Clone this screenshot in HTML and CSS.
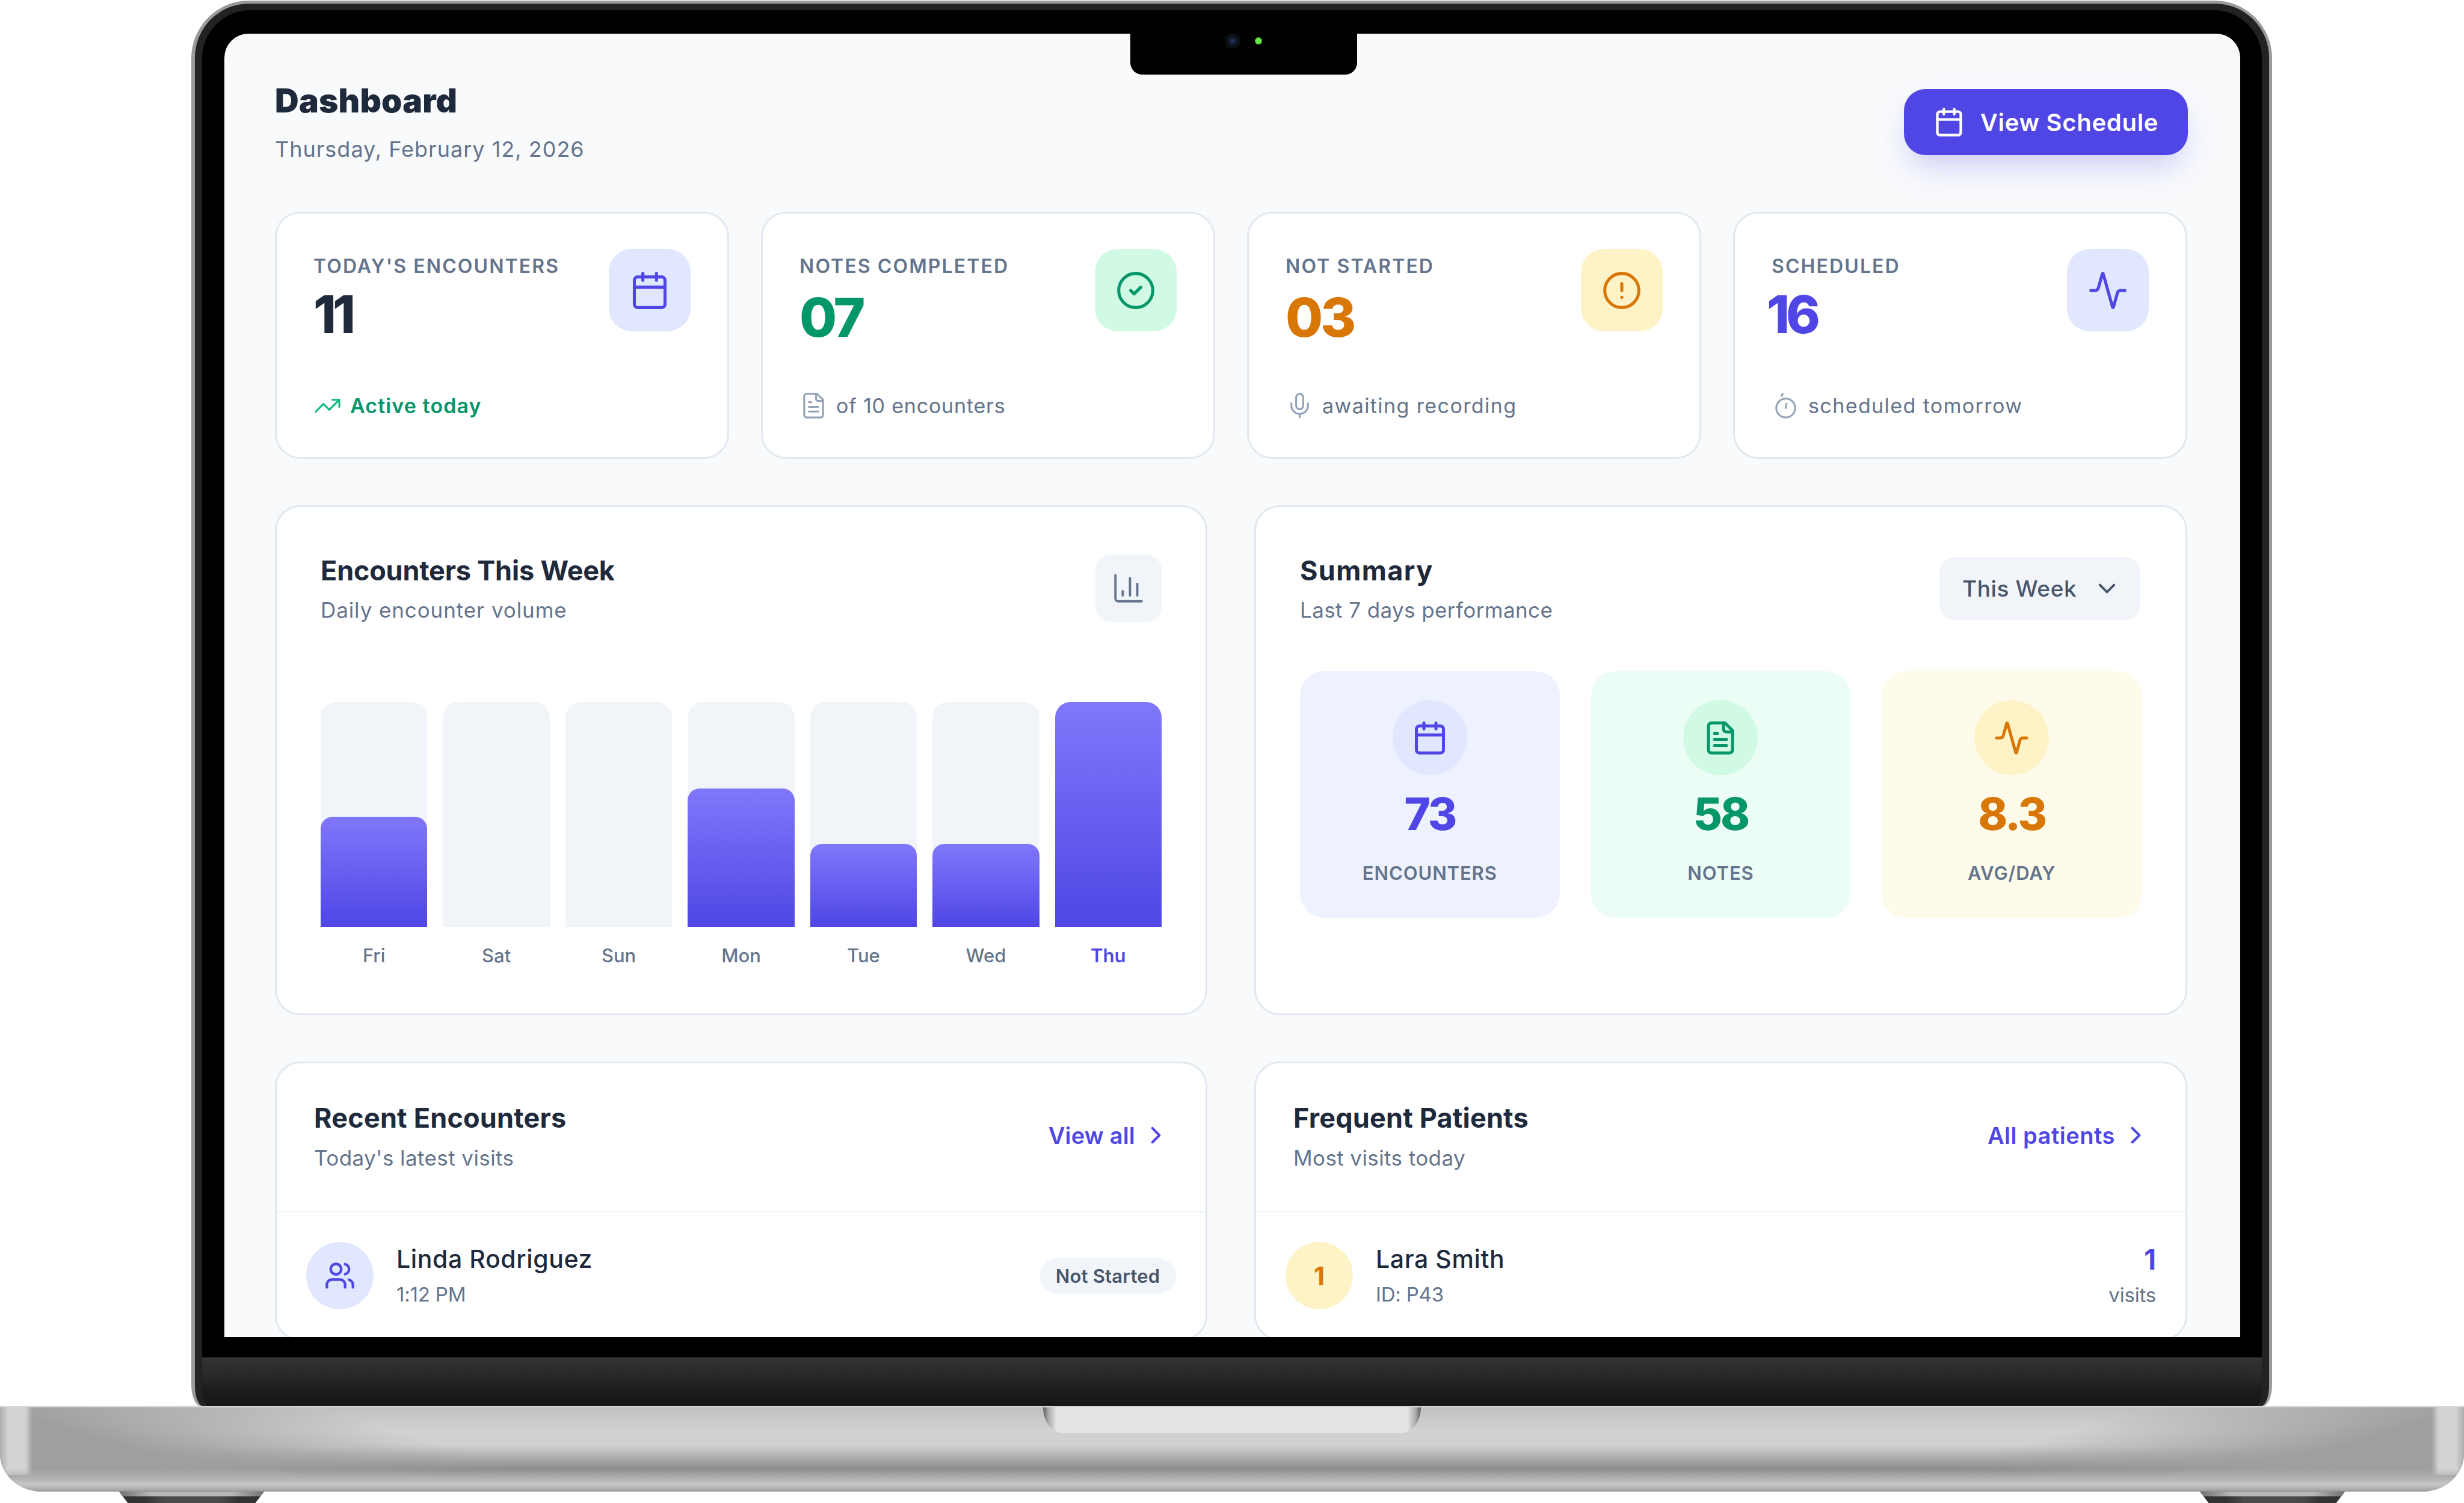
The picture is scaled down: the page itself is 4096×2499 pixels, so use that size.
FILE: index.html
```html
<!DOCTYPE html>
<html lang="en">
<head>
<meta charset="utf-8">
<title>Dashboard</title>
<link rel="stylesheet" href="styles.css">
</head>
<body>
<svg class="sprite" xmlns="http://www.w3.org/2000/svg">
  <symbol id="i-calendar" viewBox="0 0 24 24"><path d="M8 2v4"/><path d="M16 2v4"/><rect x="3" y="4" width="18" height="18" rx="2"/><path d="M3 10h18"/></symbol>
  <symbol id="i-check" viewBox="0 0 24 24"><circle cx="12" cy="12" r="10"/><path d="m9 12 2 2 4-4"/></symbol>
  <symbol id="i-alert" viewBox="0 0 24 24"><circle cx="12" cy="12" r="10"/><path d="M12 8v4"/><path d="M12 16h.01"/></symbol>
  <symbol id="i-activity" viewBox="0 0 24 24"><path d="M22 12h-2.48a2 2 0 0 0-1.93 1.46l-2.35 8.36a.25.25 0 0 1-.48 0L9.24 2.18a.25.25 0 0 0-.48 0l-2.35 8.36A2 2 0 0 1 4.49 12H2"/></symbol>
  <symbol id="i-trend" viewBox="0 0 24 24"><path d="M22 7 13.5 15.5 8.5 10.5 2 17"/><path d="M16 7h6v6"/></symbol>
  <symbol id="i-file" viewBox="0 0 24 24"><path d="M15 2H6a2 2 0 0 0-2 2v16a2 2 0 0 0 2 2h12a2 2 0 0 0 2-2V7Z"/><path d="M14 2v4a2 2 0 0 0 2 2h4"/><path d="M10 9H8"/><path d="M16 13H8"/><path d="M16 17H8"/></symbol>
  <symbol id="i-mic" viewBox="0 0 24 24"><path d="M12 2a3 3 0 0 0-3 3v7a3 3 0 0 0 6 0V5a3 3 0 0 0-3-3Z"/><path d="M19 10v2a7 7 0 0 1-14 0v-2"/><path d="M12 19v3"/></symbol>
  <symbol id="i-timer" viewBox="0 0 24 24"><circle cx="12" cy="14" r="8"/><path d="M12 14l.6-3.6"/><path d="M8.4 3.6 9.4 2"/></symbol>
  <symbol id="i-bars" viewBox="0 0 24 24"><path d="M3 3v16a2 2 0 0 0 2 2h16"/><path d="M18 17V9"/><path d="M13 17V5"/><path d="M8 17v-3"/></symbol>
  <symbol id="i-users" viewBox="0 0 24 24"><path d="M16 21v-2a4 4 0 0 0-4-4H6a4 4 0 0 0-4 4v2"/><circle cx="9" cy="7" r="4"/><path d="M22 21v-2a4 4 0 0 0-3-3.87"/><path d="M16 3.13a4 4 0 0 1 0 7.75"/></symbol>
  <symbol id="i-right" viewBox="0 0 24 24"><path d="m9 18 6-6-6-6"/></symbol>
  <symbol id="i-down" viewBox="0 0 24 24"><path d="m6 9 6 6 6-6"/></symbol>
</svg>

<div class="laptop">
  <div class="lid">
    <div class="lid-dark">
      <div class="lid-black">
        <div class="screen-wrap">
          <main class="screen">
            <div class="notch"><span class="cam"></span><span class="led"></span></div>

            <header class="page-head">
              <div>
                <h1 class="page-title">Dashboard</h1>
                <p class="page-date">Thursday, February 12, 2026</p>
              </div>
              <button class="btn-primary"><svg class="ico ico-btn"><use href="#i-calendar"/></svg>View Schedule</button>
            </header>

            <section class="stats">
              <article class="stat">
                <div class="stat-top">
                  <div>
                    <div class="stat-label">TODAY'S ENCOUNTERS</div>
                    <div class="stat-value c-ink">11</div>
                  </div>
                  <div class="tile t-indigo"><svg class="ico ico-tile c-indigo"><use href="#i-calendar"/></svg></div>
                </div>
                <div class="stat-foot f-green"><svg class="ico ico-foot c-emerald"><use href="#i-trend"/></svg>Active today</div>
              </article>
              <article class="stat">
                <div class="stat-top">
                  <div>
                    <div class="stat-label">NOTES COMPLETED</div>
                    <div class="stat-value stat-value-alt c-green">07</div>
                  </div>
                  <div class="tile t-green"><svg class="ico ico-tile c-green"><use href="#i-check"/></svg></div>
                </div>
                <div class="stat-foot stat-foot-tight"><svg class="ico ico-foot c-muted"><use href="#i-file"/></svg>of 10 encounters</div>
              </article>
              <article class="stat">
                <div class="stat-top">
                  <div>
                    <div class="stat-label">NOT STARTED</div>
                    <div class="stat-value stat-value-alt c-amber">03</div>
                  </div>
                  <div class="tile t-amber"><svg class="ico ico-tile c-amber"><use href="#i-alert"/></svg></div>
                </div>
                <div class="stat-foot"><svg class="ico ico-foot c-muted"><use href="#i-mic"/></svg>awaiting recording</div>
              </article>
              <article class="stat">
                <div class="stat-top">
                  <div>
                    <div class="stat-label">SCHEDULED</div>
                    <div class="stat-value stat-value-out c-indigo">16</div>
                  </div>
                  <div class="tile t-indigo"><svg class="ico ico-tile c-indigo"><use href="#i-activity"/></svg></div>
                </div>
                <div class="stat-foot"><svg class="ico ico-foot c-muted"><use href="#i-timer"/></svg>scheduled tomorrow</div>
              </article>
            </section>

            <section class="two-col">
              <article class="panel panel-pad">
                <div class="panel-head">
                  <div>
                    <h2 class="h2 h2-tight">Encounters This Week</h2>
                    <p class="sub sub-wide">Daily encounter volume</p>
                  </div>
                  <div class="icon-btn"><svg class="ico ico-bars c-mid"><use href="#i-bars"/></svg></div>
                </div>
                <div class="chart">
                  <div class="bar-col"><div class="track"><div class="fill" style="height:49%"></div></div><div class="day">Fri</div></div>
                  <div class="bar-col"><div class="track"></div><div class="day">Sat</div></div>
                  <div class="bar-col"><div class="track"></div><div class="day">Sun</div></div>
                  <div class="bar-col"><div class="track"><div class="fill" style="height:61.5%"></div></div><div class="day">Mon</div></div>
                  <div class="bar-col"><div class="track"><div class="fill" style="height:37%"></div></div><div class="day">Tue</div></div>
                  <div class="bar-col"><div class="track"><div class="fill" style="height:37%"></div></div><div class="day">Wed</div></div>
                  <div class="bar-col"><div class="track"><div class="fill" style="height:100%"></div></div><div class="day day-now">Thu</div></div>
                </div>
              </article>

              <article class="panel panel-pad">
                <div class="panel-head panel-head-sum">
                  <div>
                    <h2 class="h2 h2-wide">Summary</h2>
                    <p class="sub">Last 7 days performance</p>
                  </div>
                  <button class="select">This Week<svg class="ico ico-chev c-slate"><use href="#i-down"/></svg></button>
                </div>
                <div class="sum-grid">
                  <div class="sum s-indigo">
                    <div class="sum-circle t-indigo"><svg class="ico ico-sum c-indigo"><use href="#i-calendar"/></svg></div>
                    <div class="sum-value c-indigo">73</div>
                    <div class="sum-label">ENCOUNTERS</div>
                  </div>
                  <div class="sum s-green">
                    <div class="sum-circle t-green"><svg class="ico ico-sum c-green"><use href="#i-file"/></svg></div>
                    <div class="sum-value c-green">58</div>
                    <div class="sum-label">NOTES</div>
                  </div>
                  <div class="sum s-amber">
                    <div class="sum-circle t-amber"><svg class="ico ico-sum c-amber"><use href="#i-activity"/></svg></div>
                    <div class="sum-value c-amber">8.3</div>
                    <div class="sum-label">AVG/DAY</div>
                  </div>
                </div>
              </article>
            </section>

            <section class="two-col two-col-last">
              <article class="panel">
                <div class="list-head">
                  <div>
                    <h2 class="h2">Recent Encounters</h2>
                    <p class="sub sub-list">Today's latest visits</p>
                  </div>
                  <a class="link">View all<svg class="ico ico-chev c-indigo"><use href="#i-right"/></svg></a>
                </div>
                <div class="row">
                  <div class="avatar t-indigo"><svg class="ico ico-avatar c-indigo"><use href="#i-users"/></svg></div>
                  <div class="row-main">
                    <div class="name">Linda Rodriguez</div>
                    <div class="meta">1:12 PM</div>
                  </div>
                  <span class="badge">Not Started</span>
                </div>
              </article>

              <article class="panel">
                <div class="list-head">
                  <div>
                    <h2 class="h2">Frequent Patients</h2>
                    <p class="sub sub-list">Most visits today</p>
                  </div>
                  <a class="link link-wide">All patients<svg class="ico ico-chev c-indigo"><use href="#i-right"/></svg></a>
                </div>
                <div class="row">
                  <div class="avatar t-amber rank">1</div>
                  <div class="row-main">
                    <div class="name">Lara Smith</div>
                    <div class="meta">ID: P43</div>
                  </div>
                  <div class="visits">
                    <div class="visits-n">1</div>
                    <div class="meta">visits</div>
                  </div>
                </div>
              </article>
            </section>
          </main>
        </div>
        <div class="chin"></div>
      </div>
    </div>
  </div>
  <div class="base"><div class="thumb"></div></div>
  <div class="feet"><span class="foot"></span><span class="foot"></span></div>
</div>
</body>
</html>
```

FILE: styles.css
```css
* { box-sizing: border-box; }
html, body { margin: 0; padding: 0; background: #fff; }
body { width: 4096px; height: 2499px; overflow: hidden; font-family: "Inter", "Liberation Sans", sans-serif; color: #1e293b; }
h1, h2, p { margin: 0; }
.sprite { display: none; }
.ico { fill: none; stroke: currentColor; stroke-width: 2; stroke-linecap: round; stroke-linejoin: round; flex: none; display: block; }

/* colours */
.c-ink { color: #1e293b; }
.c-indigo { color: #4f46e5; }
.c-green { color: #059669; }
.c-emerald { color: #10b981; }
.c-amber { color: #d97706; }
.c-muted { color: #94a3b8; }
.c-mid { color: #64748b; }
.c-slate { color: #475569; }
.t-indigo { background: #e0e7ff; }
.t-green { background: #d1fae5; }
.t-amber { background: #fef3c7; }
.s-indigo { background: #eef2ff; }
.s-green { background: #ecfdf5; }
.s-amber { background: #fffbeb; }

/* device */
.laptop { display: flex; flex-direction: column; width: 4096px; }
.lid { width: 3459px; height: 2337px; margin: 1px 0 0 318px; padding: 5px 5px 0 6px; background: #9a9a9c; border-radius: 96px 96px 16px 16px / 96px 96px 36px 36px; }
.lid-dark { height: 100%; padding: 11px 12px 0 12px; background: #222; border-radius: 90px 90px 14px 14px / 90px 90px 34px 34px; }
.lid-black { height: 100%; display: flex; flex-direction: column; background: #000; border-radius: 80px 80px 12px 12px / 80px 80px 32px 32px; overflow: hidden; }
.screen-wrap { padding: 39px 36px 34px 37px; }
.chin { flex: 1; background: linear-gradient(#343434, #2a2a2a 30%, #1c1c1c 70%, #161616); }
.screen { position: relative; height: 2167px; padding: 92px 87px 0 84px; overflow: hidden; background: #f8fafc; border-radius: 40px 40px 0 0; }
.notch { position: absolute; left: 1506px; top: 0; width: 377px; height: 68px; background: #000; border-radius: 0 0 20px 20px; }
.cam { position: absolute; left: 157px; top: -1px; width: 26px; height: 26px; border-radius: 50%; background: radial-gradient(circle, #22305a 0, #1a2440 22%, #0b0f14 45%, #0b0f14 90%, #000 100%); }
.led { position: absolute; left: 207px; top: 6px; width: 12px; height: 12px; border-radius: 50%; background: radial-gradient(circle, #6be84a 40%, #2f8a20 100%); }

.base { width: 4096px; height: 142px; display: flex; justify-content: center; align-items: flex-start; border-radius: 0 0 70px 70px / 0 0 63px 63px; border-top: 2px solid #d5d6d7;
  background:
    linear-gradient(to top, #8e8f91 0, #a8a9ab 3px, #c6c7c9 12px, #b0b1b3 22px, rgba(138,139,141,0) 38px),
    linear-gradient(90deg, #adaeb0 0, #d2d3d5 14px, #d2d3d5 42px, rgba(210,211,213,0) 54px) left top / 60px 80% no-repeat,
    linear-gradient(270deg, #adaeb0 0, #d2d3d5 14px, #d2d3d5 42px, rgba(210,211,213,0) 54px) right top / 60px 80% no-repeat,
    linear-gradient(17deg, #9e9fa1 130px, rgba(158,159,161,0) 290px),
    linear-gradient(-17deg, #9e9fa1 130px, rgba(158,159,161,0) 290px),
    linear-gradient(#bfc0c2 0, #d0d1d3 27%, #cfd0d2 45%, #8a8b8d 74%, #8a8b8d 88%, #a0a1a3 100%);
}
.thumb { width: 628px; height: 43px; border-radius: 0 0 34px 34px / 0 0 43px 43px; background: linear-gradient(90deg, #59595b 0, #a4a5a7 8px, #e3e4e6 22px, #e3e4e6 calc(100% - 22px), #a4a5a7 calc(100% - 8px), #59595b 100%); }
.feet { display: flex; justify-content: space-between; padding: 0 198px; }
.foot { width: 241px; height: 19px; clip-path: polygon(0 0, 100% 0, 94% 100%, 6% 100%);
  background:
    linear-gradient(90deg, #6f7072, #b6b7b9 22%, #b6b7b9 78%, #6f7072) top / 100% 8px no-repeat,
    linear-gradient(90deg, #333 0, #333 18%, #4a4a4a 30%, #4a4a4a 70%, #333 82%, #333 100%); }

/* header */
.page-head { display: flex; justify-content: space-between; align-items: flex-start; height: 110px; margin-bottom: 94px; }
.page-title { font-size: 55px; line-height: 60px; font-weight: 900; color: #1e293b; letter-spacing: 0.2px; margin-top: -11px; }
.page-date { font-size: 36px; line-height: 50px; color: #64748b; margin-top: 26px; letter-spacing: 1px; }
.btn-primary { display: flex; align-items: center; justify-content: center; gap: 26px; width: 472px; height: 110px; border: 0; border-radius: 36px; background: #4f46e5; color: #fff; font: 600 40px "Inter", sans-serif; letter-spacing: 0.7px; box-shadow: 0 26px 52px -12px rgba(79, 70, 229, 0.28); }
.ico-btn { width: 52px; height: 52px; }

/* stat cards */
.stats { display: grid; grid-template-columns: repeat(4, 755px); gap: 53px; margin-bottom: 77px; }
.stat { height: 411px; padding: 59px 61px; background: #fff; border: 3px solid #e2e8f0; border-radius: 42px; display: flex; flex-direction: column; justify-content: space-between; }
.stat-top { display: flex; justify-content: space-between; align-items: flex-start; }
.stat-label { margin-top: 2px; font-size: 32px; line-height: 54px; font-weight: 600; color: #64748b; letter-spacing: 2.1px; white-space: nowrap; }
.stat-value { margin-top: 3px; font-size: 86px; line-height: 100px; font-weight: 800; letter-spacing: -6px; }
.stat-value-alt { font-size: 90px; line-height: 110px; letter-spacing: -4px; }
.stat-value-out { margin-left: -8px; }
.tile { width: 136px; height: 137px; border-radius: 38px; display: flex; align-items: center; justify-content: center; flex: none; }
.ico-tile { width: 68px; height: 68px; stroke-width: 1.8; }
.stat-foot { display: flex; align-items: center; gap: 14px; height: 54px; font-size: 34px; color: #64748b; letter-spacing: 1.4px; white-space: nowrap; }
.stat-foot-tight { letter-spacing: 0.8px; }
.f-green { color: #059669; font-weight: 600; letter-spacing: 1.1px; }
.ico-foot { width: 47px; height: 47px; stroke-width: 1.6; }

/* panels */
.two-col { display: grid; grid-template-columns: 1550px 1551px; gap: 78px; margin-bottom: 77px; }
.two-col-last { margin-bottom: 0; }
.panel { background: #fff; border: 3px solid #e2e8f0; border-radius: 42px; }
.panel-pad { padding: 79px 73px 76px; }
.panel-head { display: flex; justify-content: space-between; align-items: flex-start; min-height: 112px; margin-bottom: 128px; }
.panel-head-sum { margin-bottom: 77px; padding-right: 2px; }
.h2 { padding-top: 2px; font-size: 45px; line-height: 50px; font-weight: 700; color: #1e293b; letter-spacing: 0.2px; }
.h2-tight { letter-spacing: -0.2px; }
.h2-wide { letter-spacing: 1.4px; }
.sub { font-size: 35px; line-height: 50px; color: #64748b; margin-top: 15px; letter-spacing: 0.4px; white-space: nowrap; }
.sub-wide { letter-spacing: 0.9px; }
.sub-list { margin-top: 16px; }
.icon-btn { width: 110px; height: 112px; border-radius: 26px; background: #f1f5f9; display: flex; align-items: center; justify-content: center; }
.ico-bars { width: 58px; height: 58px; stroke-width: 1.6; }

.chart { display: grid; grid-template-columns: repeat(7, 1fr); gap: 26px; }
.track { height: 374px; border-radius: 26px 26px 0 0; background: #f1f5f9; display: flex; align-items: flex-end; overflow: hidden; }
.fill { width: 100%; border-radius: 20px 20px 0 0; background: linear-gradient(#8177fb, #4f46e5); }
.day { margin-top: 28px; line-height: 40px; font-size: 31px; font-weight: 500; color: #64748b; text-align: center; }
.day-now { color: #4f46e5; font-weight: 600; }

.select { display: flex; align-items: center; justify-content: space-between; width: 334px; height: 105px; margin-top: 4px; padding: 0 32px 0 38px; border: 0; border-radius: 26px; background: #f1f5f9; color: #475569; font: 500 37px "Inter", sans-serif; letter-spacing: 0.6px; }
.ico-chev { width: 47px; height: 47px; stroke-width: 2; }

.sum-grid { display: grid; grid-template-columns: repeat(3, 1fr); gap: 52px; }
.sum { height: 410px; padding-top: 48px; border-radius: 40px; display: flex; flex-direction: column; align-items: center; }
.sum-circle { width: 124px; height: 125px; border-radius: 50%; display: flex; align-items: center; justify-content: center; }
.ico-sum { width: 60px; height: 60px; stroke-width: 2; }
.sum-value { margin-top: 24px; font-size: 74px; line-height: 80px; font-weight: 800; letter-spacing: -3px; }
.sum-label { margin-top: 39px; font-size: 31px; line-height: 40px; font-weight: 600; color: #64748b; letter-spacing: 0.9px; }

/* lists */
.list-head { display: flex; justify-content: space-between; align-items: center; height: 248px; padding: 0 59px 0 62px; border-bottom: 3px solid #f1f5f9; }
.link { display: flex; align-items: center; gap: 11px; margin-top: -6px; font-size: 38px; font-weight: 600; color: #4f46e5; letter-spacing: 0.2px; }
.link-wide { letter-spacing: 0.5px; }
.row { display: flex; align-items: center; gap: 38px; padding: 49px; }
.row-main { flex: 1; margin-top: -2px; }
.avatar { width: 112px; height: 112px; border-radius: 50%; display: flex; align-items: center; justify-content: center; flex: none; }
.ico-avatar { width: 52px; height: 52px; stroke-width: 2; }
.rank { color: #d97706; font-size: 42px; font-weight: 700; }
.name { font-size: 41px; line-height: 54px; font-weight: 500; color: #1e293b; letter-spacing: 0.6px; }
.meta { font-size: 33px; line-height: 44px; color: #64748b; margin-top: 10px; letter-spacing: -0.2px; }
.badge { width: 227px; height: 59px; border-radius: 30px; background: #f1f5f9; display: flex; align-items: center; justify-content: center; font-size: 31px; font-weight: 600; color: #475569; letter-spacing: 0.2px; }
.visits { text-align: right; }
.visits-n { font-size: 46px; line-height: 54px; font-weight: 700; color: #4f46e5; }
```
